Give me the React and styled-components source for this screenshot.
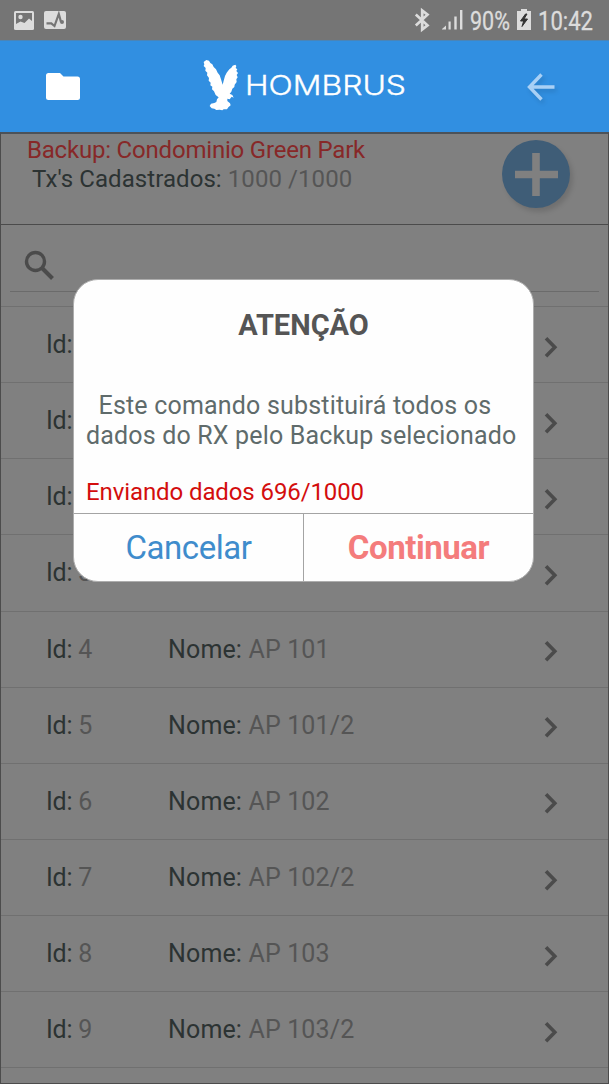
import React from "react";
import styled, { createGlobalStyle } from "styled-components";

const Global = createGlobalStyle`
  * { box-sizing: border-box; }
  body { margin: 0; background: #808080; font-family: Roboto, sans-serif; overflow: hidden; }
  svg { display: block; }
`;

const Screen = styled.div`
  position: relative;
  width: 609px;
  height: 1084px;
  display: flex;
  flex-direction: column;
  overflow: hidden;
`;

const StatusBar = styled.div`
  height: 40px;
  flex: none;
  background: #757575;
  display: flex;
  align-items: center;
  justify-content: space-between;
  padding: 0 14px 0 14px;
`;

const StatusGroup = styled.div`
  display: flex;
  align-items: center;
  gap: ${(p) => p.$gap}px;
`;

const StatusText = styled.svg`
  fill: #dcdcdc;
  stroke: #dcdcdc;
  stroke-width: 0.3px;
  font: 400 25px Roboto, sans-serif;
  overflow: visible;
`;

const Header = styled.header`
  height: 92px;
  flex: none;
  background: #318fe1;
  border-top: 1px solid #4a85b8;
  display: flex;
  align-items: center;
  justify-content: space-between;
  padding: 0 54px 0 46px;
`;

const Logo = styled.div`
  display: flex;
  align-items: center;
  gap: 7px;
  margin: 0 63px 2px 65px;
`;

const Wordmark = styled.svg`
  fill: #fff;
  stroke: #fff;
  stroke-width: 0.35px;
  font: 300 26.5px Inter, sans-serif;
  overflow: visible;
`;

const BackArrow = styled.svg`
  filter: drop-shadow(2px 3px 2px rgba(0, 0, 0, 0.12));
`;

const Page = styled.main`
  flex: 1;
  min-height: 0;
  background: #808080;
  border: 1px solid #4c4c4c;
  border-top: 2px solid #4c5259;
  display: flex;
  flex-direction: column;
  overflow: hidden;
`;

const Summary = styled.section`
  height: 91px;
  flex: none;
  border-bottom: 1px solid #4b4b4b;
  display: flex;
  justify-content: space-between;
  padding: 2px 38px 0 26px;
`;

const Line = styled.div`
  font-size: ${(p) => p.$size}px;
  line-height: ${(p) => p.$lh}px;
  letter-spacing: ${(p) => p.$ls || 0}px;
  color: ${(p) => p.$color};
  padding-left: ${(p) => p.$indent || 0}px;
  white-space: pre;
`;

const Muted = styled.span`
  color: #555;
`;

const AddButton = styled.button`
  width: 68px;
  height: 68px;
  margin-top: 4px;
  padding: 0;
  border: 0;
  border-radius: 50%;
  background: #3f5d77;
  box-shadow: 3px 4px 5px rgba(0, 0, 0, 0.13);
`;

const Search = styled.div`
  height: 67px;
  flex: none;
  margin: 0 9px;
  border-bottom: 1px solid #6b6b6b;
  padding: 20px 0 0 8px;
`;

const List = styled.div`
  margin-top: 14px;
  border-top: 1px solid #707070;
`;

const Row = styled.div`
  height: 76.15px;
  border-bottom: 1px solid #707070;
  display: grid;
  grid-template-columns: 122px 1fr 40px;
  align-items: center;
  padding: 0 34px 0 45px;
  font-size: 25px;
  color: #2c3333;
  white-space: pre;
`;

const RowId = styled.span`
  letter-spacing: -0.2px;
`;

const RowName = styled.span`
  letter-spacing: 0.15px;
`;

const Overlay = styled.div`
  position: absolute;
  inset: 0;
  display: flex;
  align-items: flex-start;
  justify-content: center;
  padding-top: 279px;
  padding-right: 2px;
`;

const Dialog = styled.div`
  width: 461px;
  height: 303px;
  background: #fefefe;
  border: 1px solid #adadad;
  border-radius: 25px;
  overflow: hidden;
  display: flex;
  flex-direction: column;
`;

const DialogTitle = styled.h1`
  margin: 28px 0 0;
  font-size: 29px;
  line-height: 34px;
  font-weight: 700;
  color: #555;
  text-align: center;
`;

const DialogBody = styled.div`
  flex: 1;
  padding: 49px 0 0 12px;
`;

const Progress = styled.div`
  margin-top: 26px;
`;

const Actions = styled.div`
  height: 68px;
  flex: none;
  display: grid;
  grid-template-columns: 230px 1fr;
  border-top: 1px solid #a4a4a4;
`;

const Action = styled.button`
  border: 0;
  border-right: ${(p) => (p.$divided ? "1px solid #a4a4a4" : "0")};
  background: transparent;
  padding: 0;
  font: ${(p) => p.$weight} 33px Roboto, sans-serif;
  letter-spacing: -0.45px;
  color: ${(p) => p.$color};
`;

const rows = [
  { id: 0 },
  { id: 1 },
  { id: 2 },
  { id: 3 },
  { id: 4, name: "AP 101" },
  { id: 5, name: "AP 101/2" },
  { id: 6, name: "AP 102" },
  { id: 7, name: "AP 102/2" },
  { id: 8, name: "AP 103" },
  { id: 9, name: "AP 103/2" },
];

const Chevron = () => (
  <svg width="40" height="30" viewBox="0 0 40 30">
    <path d="M12 8.200 20.800 17.200 12 26.200" fill="none" stroke="#4b4b4b" strokeWidth="3.600" />
  </svg>
);

const Eagle = () => (
  <svg width="37" height="52" viewBox="18 18 111 156" fill="#fff">
    <path d="M20 24 28 18 36 20 40 27 46 31 50 39 57 46 62 56 68 64 72 76 77 92 80 80 84 66 89 56 97 46 103 41 107 35 115 32 118 36 116 42 121 46 118 51 123 57 119 63 122 70 118 76 119 84 113 92 112 99 106 104 103 113 98 119 106 123 110 131 104 128 98 136 91 134 91 141 99 148 101 154 94 160 90 166 80 166 76 169 68 167 58 168 52 164 44 163 38 156 42 149 52 147 58 144 60 136 65 130 56 123 51 112 45 106 46 98 40 94 41 86 35 80 36 72 30 64 31 56 25 50 26 42 20 36 22 31Z" />
  </svg>
);

export default function App() {
  return (
    <>
      <Global />
      <Screen>
        <StatusBar>
          <StatusGroup $gap={10}>
            <svg width="20" height="19" viewBox="0 0 20 19">
              <rect width="20" height="19" rx="1.500" fill="#dcdcdc" />
              <path d="M2 2h16v8l-3-2.500L10.500 12l-4-1.500L2 13Z" fill="#757575" />
              <circle cx="6.500" cy="6" r="2.200" fill="#dcdcdc" />
            </svg>
            <svg width="22" height="18" viewBox="0 0 22 18">
              <rect width="22" height="18" rx="2" fill="#dcdcdc" />
              <path d="M2.500 12.300h4.800l3.200 2.700L14.800 3l2.200 8" fill="none" stroke="#757575" strokeWidth="2.200" />
              <circle cx="18" cy="11" r="2" fill="#757575" />
            </svg>
          </StatusGroup>
          <StatusGroup $gap={0}>
            <svg width="56" height="40" viewBox="414 0 56 40">
              <path d="m415.800 14.500 11.700 10.800-5.300 4.200V10.500l5.300 4.200-11.700 10.800" fill="none" stroke="#dcdcdc" strokeWidth="2.700" />
              <path d="M442 29.500v-.5l4-3.500v4ZM448.500 21.500h2.200v8h-2.200ZM454.300 16.500h2.400v13h-2.400ZM460 10h2.400v19.500H460Z" fill="#dcdcdc" />
            </svg>
            <StatusText width="47" height="40">
              <text x="0" y="29.500" textLength="40" lengthAdjust="spacingAndGlyphs">90%</text>
            </StatusText>
            <svg width="21" height="40" viewBox="517 0 21 40">
              <path d="M517 11h4V9h6v2h4v19h-14Z" fill="#dcdcdc" />
              <path d="m525.500 14-5 7h3.200l-1.700 5.500 5.500-7.500H524l3-5Z" fill="#333" stroke="#333" />
            </svg>
            <StatusText width="57" height="40">
              <text x="0" y="29.500" textLength="55" lengthAdjust="spacingAndGlyphs">10:42</text>
            </StatusText>
          </StatusGroup>
        </StatusBar>
        <Header>
          <svg width="34" height="27" viewBox="0 0 34 27">
            <path d="M2.500 0H14l3.500 3.500h14A2.500 2.500 0 0 1 34 6v18.500a2.500 2.500 0 0 1-2.500 2.500h-29A2.500 2.500 0 0 1 0 24.500v-22A2.500 2.500 0 0 1 2.500 0Z" fill="#fff" />
          </svg>
          <Logo>
            <Eagle />
            <Wordmark width="160" height="30">
              <text x="-2" y="24" textLength="161" lengthAdjust="spacingAndGlyphs">HOMBRUS</text>
            </Wordmark>
          </Logo>
          <BackArrow width="28" height="28" viewBox="0 0 28 28" fill="none" stroke="#a9d0f5" strokeWidth="3.400">
            <path d="M27.500 14H3M14.500 1.500 2.500 14l12 12.500" />
          </BackArrow>
        </Header>
        <Page>
          <Summary>
            <div>
              <Line $size={24} $lh={29} $ls={-0.2} $color="#872828">Backup: Condominio Green Park</Line>
              <Line $size={24} $lh={29} $ls={0.07} $indent={5} $color="#2c3333">
                Tx's Cadastrados: <Muted>1000 /1000</Muted>
              </Line>
            </div>
            <AddButton aria-label="+">
              <svg width="68" height="68" viewBox="0 0 68 68">
                <path d="M34 13v43M13 34.500h43" stroke="#808080" strokeWidth="7.600" />
              </svg>
            </AddButton>
          </Summary>
          <Search>
            <svg width="42" height="40" viewBox="18 245 42 40" fill="none" stroke="#4b4b4b">
              <circle cx="35.500" cy="261.500" r="9" strokeWidth="3.400" />
              <path d="m42 268 10.500 10.500" strokeWidth="4" />
            </svg>
          </Search>
          <List>
            {rows.map(({ id, name }) => (
              <Row key={id}>
                <RowId>Id: {id > 2 && <Muted>{id}</Muted>}</RowId>
                <RowName>{name && <>Nome: <Muted>{name}</Muted></>}</RowName>
                <Chevron />
              </Row>
            ))}
          </List>
        </Page>
        <Overlay>
          <Dialog role="dialog">
            <DialogTitle>ATENÇÃO</DialogTitle>
            <DialogBody>
              <Line $size={25} $lh={30} $ls={0.19} $indent={12.5} $color="#5f6b6b">Este comando substituirá todos os</Line>
              <Line $size={25} $lh={30} $ls={0.17} $color="#5f6b6b">dados do RX pelo Backup selecionado</Line>
              <Progress>
                <Line $size={24} $lh={30} $ls={-0.1} $color="#d30d0d">Enviando dados 696/1000</Line>
              </Progress>
            </DialogBody>
            <Actions>
              <Action $divided $weight={400} $color="#3f8ccc">Cancelar</Action>
              <Action $weight={700} $color="#f47c7c">Continuar</Action>
            </Actions>
          </Dialog>
        </Overlay>
      </Screen>
    </>
  );
}
